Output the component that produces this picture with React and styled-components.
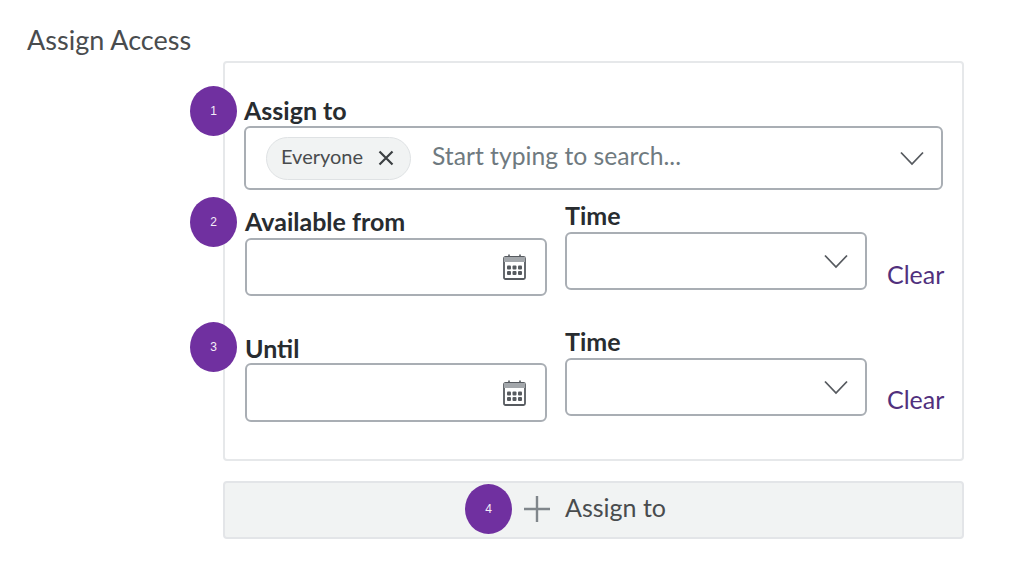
import React from 'react'
import styled, { createGlobalStyle } from 'styled-components'

const GlobalStyle = createGlobalStyle`
  body {
    margin: 0;
    background: #fff;
    font-family: Lato, "Open Sans", sans-serif;
  }
`
const Page = styled.div`
  width: 1024px;
  height: 576px;
  padding: 25px 60px 0 27px;
  box-sizing: border-box;
  overflow: hidden;
`
const Title = styled.h1`
  margin: 0;
  font-size: 27px;
  line-height: 30px;
  font-weight: 400;
  color: #494c4e;
`
const Body = styled.div`
  margin: 6px 0 0 196px;
  width: 741px;
`
const Card = styled.section`
  box-sizing: border-box;
  height: 400px;
  padding: 33px 19px 0 19px;
  border: 2px solid #e6e8ea;
  border-radius: 4px;
`
const Label = styled.label`
  display: block;
  height: 30px;
  font-size: 25px;
  line-height: ${({ $line }) => $line || 27}px;
  font-weight: 700;
  color: #282c30;
`
const Annotated = styled.div`
  position: relative;
`
const Badge = styled.span`
  position: absolute;
  left: ${({ $left }) => $left}px;
  top: ${({ $top }) => $top}px;
  width: 47px;
  height: 50px;
  border-radius: 50%;
  background: #7030a0;
  color: #f4eef8;
  display: flex;
  align-items: center;
  justify-content: center;
  font-family: "Liberation Sans", sans-serif;
  font-size: 12px;
`
const Combo = styled.div`
  box-sizing: border-box;
  height: 64px;
  width: 699px;
  display: flex;
  align-items: center;
  padding: 0 17px 0 20px;
  border: 2px solid #a9aeb4;
  border-radius: 6px;
`
const Chip = styled.span`
  box-sizing: border-box;
  width: 145px;
  height: 43px;
  display: flex;
  align-items: center;
  gap: 15px;
  padding: 0 13px 0 14px;
  border: 1.5px solid #dfe2e4;
  border-radius: 22px;
  background: #f1f3f3;
  font-size: 20px;
  color: #494c4e;
`
const ChipText = styled.span`
  margin-top: -4px;
`
const Placeholder = styled.span`
  flex: 1;
  margin: -5px 0 0 21px;
  font-size: 24.7px;
  color: #6f7a80;
`
const Row = styled.div`
  display: flex;
  gap: 18px;
  margin: ${({ $top }) => $top}px 0 0 1px;
`
const Field = styled.div`
  position: relative;
  flex: 0 0 302px;
  padding-top: ${({ $offset }) => $offset || 0}px;
`
const Input = styled.div`
  box-sizing: border-box;
  height: ${({ $height }) => $height}px;
  display: flex;
  align-items: center;
  justify-content: flex-end;
  padding-right: ${({ $right }) => $right}px;
  border: 2px solid #a9aeb4;
  border-radius: 6px;
  background: #fff;
`
const Clear = styled.a`
  margin: ${({ $top }) => $top}px 0 0 2px;
  font-size: 25px;
  line-height: 30px;
  color: #51307d;
`
const AddButton = styled.div`
  position: relative;
  box-sizing: border-box;
  height: 58px;
  margin-top: 20px;
  display: flex;
  align-items: center;
  justify-content: center;
  gap: 15px;
  padding: 0 0 2px 3px;
  border: 2px solid #e3e5e8;
  border-radius: 4px;
  background: #f1f3f3;
  font-size: 25px;
  color: #494c4e;
`
const AddLabel = styled.span`
  margin-top: -4px;
`

const Chevron = () => (
  <svg width="24" height="15" viewBox="0 0 24 15" fill="none" stroke="#565a5f" strokeWidth="1.8">
    <path d="M1 1.5 L12 13 L23 1.5" />
  </svg>
)
const Close = () => (
  <svg width="16" height="16" viewBox="0 0 16 16" fill="none" stroke="#3c4043" strokeWidth="2.2">
    <path d="M1.5 1.5 L14.5 14.5 M14.5 1.5 L1.5 14.5" />
  </svg>
)
const Plus = () => (
  <svg width="26" height="26" viewBox="0 0 26 26" fill="none" stroke="#80868b" strokeWidth="2.4">
    <path d="M13 0 V26 M0 13 H26" />
  </svg>
)
const Calendar = () => (
  <svg width="23" height="26" viewBox="0 0 23 26" fill="none">
    <path d="M6 0.5 V4.5 M17 0.5 V4.5" stroke="#565a5f" strokeWidth="1.6" />
    <rect x="1" y="3" width="21" height="22" rx="1.5" stroke="#565a5f" strokeWidth="1.8" />
    <rect x="1" y="3" width="21" height="5" fill="#a3a7ab" />
    {[6, 11.5, 17].flatMap((x) =>
      [13.5, 19].map((y) => <rect key={`${x}-${y}`} x={x - 2} y={y - 2} width="4" height="4" rx="1" fill="#565a5f" />)
    )}
  </svg>
)

function DateRow({ label, labelLine, top, offset, inputHeight, clearTop, badge, badgeTop }) {
  return (
    <Row $top={top}>
      <Field $offset={offset}>
        <Badge $left={-55} $top={badgeTop}>{badge}</Badge>
        <Label $line={labelLine}>{label}</Label>
        <Input $height={inputHeight} $right={19}><Calendar /></Input>
      </Field>
      <Field>
        <Label>Time</Label>
        <Input $height={58} $right={17}><Chevron /></Input>
      </Field>
      <Clear $top={clearTop}>Clear</Clear>
    </Row>
  )
}

export default function App() {
  return (
    <Page>
      <GlobalStyle />
      <Title>Assign Access</Title>
      <Body>
        <Card>
          <Annotated>
            <Badge $left={-54} $top={-10}>1</Badge>
            <Label $line={29}>Assign to</Label>
            <Combo>
              <Chip><ChipText>Everyone</ChipText> <Close /></Chip>
              <Placeholder>Start typing to search...</Placeholder>
              <Chevron />
            </Combo>
          </Annotated>
          <DateRow label="Available from" top={12} offset={6} inputHeight={58} clearTop={57} badge="2" badgeTop={-5} />
          <DateRow label="Until" labelLine={30} top={32} offset={5} inputHeight={59} clearTop={56} badge="3" badgeTop={-6} />
        </Card>
        <AddButton>
          <Badge $left={240} $top={1}>4</Badge>
          <Plus />
          <AddLabel>Assign to</AddLabel>
        </AddButton>
      </Body>
    </Page>
  )
}
